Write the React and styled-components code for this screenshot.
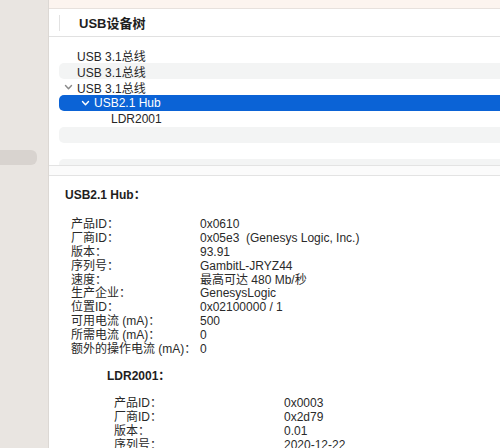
import { Fragment } from 'react';
import styled, { createGlobalStyle } from 'styled-components';

const GlobalStyle = createGlobalStyle`
  html, body {
    margin: 0;
    padding: 0;
    background: #ffffff;
  }
  body {
    font-family: "Liberation Sans", "Noto Sans CJK SC", sans-serif;
    color: #242424;
    -webkit-font-smoothing: antialiased;
  }
`;

const Window = styled.div`
  display: flex;
  width: 500px;
  height: 448px;
  overflow: hidden;
`;

const Sidebar = styled.aside`
  width: 49px;
  flex-shrink: 0;
  background: #e9e5e1;
  border-right: 1px solid #dcd8d4;
  padding-top: 150px;
  box-sizing: border-box;
`;

const SidebarItem = styled.div`
  width: 37px;
  height: 15px;
  background: #d8d3cf;
  border-radius: 0 6px 6px 0;
`;

const Main = styled.main`
  flex: 1;
  display: flex;
  flex-direction: column;
  min-width: 0;

  & > * {
    flex-shrink: 0;
  }
`;

const TopStrip = styled.div`
  height: 8px;
  background: #fcf4ef;
  border-bottom: 1px solid #e7e1dd;
`;

const Header = styled.div`
  height: 27px;
  display: flex;
  align-items: center;
  padding-left: 10px;
  border-bottom: 1px solid #e1e1e1;
`;

const HeaderDivider = styled.div`
  width: 1px;
  height: 16px;
  background: #e2e2e2;
  margin-right: 19px;
`;

const HeaderTitle = styled.span`
  font-size: 13px;
  font-weight: 700;
  color: #1e1e1e;
`;

const Tree = styled.div`
  height: 129px;
  padding: 10px 0 0 10px;
  box-sizing: border-box;
  overflow: hidden;
  border-bottom: 1px solid #e3e3e3;
`;

const Row = styled.div`
  height: 16px;
  display: flex;
  align-items: center;
  padding-left: ${(p) => 5 + p.$level * 17}px;
  border-radius: 5px 0 0 5px;
  font-size: 12px;
  background: ${(p) => (p.$selected ? '#0b63d6' : p.$striped ? '#f3f4f4' : 'transparent')};
  color: ${(p) => (p.$selected ? '#ffffff' : '#262626')};
`;

const Chevron = styled.svg`
  width: 13px;
  height: 8px;
  flex-shrink: 0;
  visibility: ${(p) => (p.$hidden ? 'hidden' : 'visible')};
`;

const Splitter = styled.div`
  height: 9px;
  background: #fbfbfb;
  border-bottom: 1px solid #e3e3e3;
`;

const Details = styled.section`
  padding: 13px 0 0 16px;
  font-size: 12px;
  line-height: 13.9px;
`;

const Block = styled.div`
  padding-left: ${(p) => p.$indent || 0}px;
`;

const BlockTitle = styled.div`
  font-weight: 700;
  color: #1e1e1e;
  margin-bottom: ${(p) => p.$gap}px;
`;

const Props = styled.div`
  display: grid;
  grid-template-columns: ${(p) => p.$keyWidth}px auto;
  padding-left: ${(p) => p.$inset}px;
  margin-bottom: 13px;
  color: #2a2a2a;
`;

const Key = styled.div`
  white-space: nowrap;
`;

const Value = styled.div`
  white-space: pre;
`;

const ChevronIcon = ({ color, hidden }) => (
  <Chevron viewBox="0 0 13 8" $hidden={hidden}>
    <polyline
      points="1.5,2.5 4.5,5.8 7.5,2.5"
      fill="none"
      stroke={color}
      strokeWidth="1.4"
      strokeLinecap="round"
      strokeLinejoin="round"
    />
  </Chevron>
);

const treeRows = [
  { label: 'USB 3.1总线', level: 0 },
  { label: 'USB 3.1总线', level: 0 },
  { label: 'USB 3.1总线', level: 0, open: true },
  { label: 'USB2.1 Hub', level: 1, open: true, selected: true },
  { label: 'LDR2001', level: 2 },
  { label: '', level: 0 },
  { label: '', level: 0 },
  { label: '', level: 0 },
];

const hubProps = [
  ['产品ID：', '0x0610'],
  ['厂商ID：', '0x05e3  (Genesys Logic, Inc.)'],
  ['版本：', '93.91'],
  ['序列号：', 'GambitL-JRYZ44'],
  ['速度：', '最高可达 480 Mb/秒'],
  ['生产企业：', 'GenesysLogic'],
  ['位置ID：', '0x02100000 / 1'],
  ['可用电流 (mA)：', '500'],
  ['所需电流 (mA)：', '0'],
  ['额外的操作电流 (mA)：', '0'],
];

const deviceProps = [
  ['产品ID：', '0x0003'],
  ['厂商ID：', '0x2d79'],
  ['版本：', '0.01'],
  ['序列号：', '2020-12-22'],
];

const PropList = ({ items, keyWidth, inset }) => (
  <Props $keyWidth={keyWidth} $inset={inset}>
    {items.map(([k, v]) => (
      <Fragment key={k}>
        <Key>{k}</Key>
        <Value>{v}</Value>
      </Fragment>
    ))}
  </Props>
);

export default function App() {
  return (
    <>
      <GlobalStyle />
      <Window>
        <Sidebar>
          <SidebarItem />
        </Sidebar>
        <Main>
          <TopStrip />
          <Header>
            <HeaderDivider />
            <HeaderTitle>USB设备树</HeaderTitle>
          </Header>
          <Tree>
            {treeRows.map((r, i) => (
              <Row key={i} $level={r.level} $striped={i % 2 === 1} $selected={r.selected}>
                <ChevronIcon color={r.selected ? '#ffffff' : '#8a8a8a'} hidden={!r.open} />
                {r.label}
              </Row>
            ))}
          </Tree>
          <Splitter />
          <Details>
            <Block>
              <BlockTitle $gap={15}>USB2.1 Hub：</BlockTitle>
              <PropList items={hubProps} keyWidth={129} inset={6} />
            </Block>
            <Block $indent={42}>
              <BlockTitle $gap={13}>LDR2001：</BlockTitle>
              <PropList items={deviceProps} keyWidth={170} inset={7} />
            </Block>
          </Details>
        </Main>
      </Window>
    </>
  );
}
